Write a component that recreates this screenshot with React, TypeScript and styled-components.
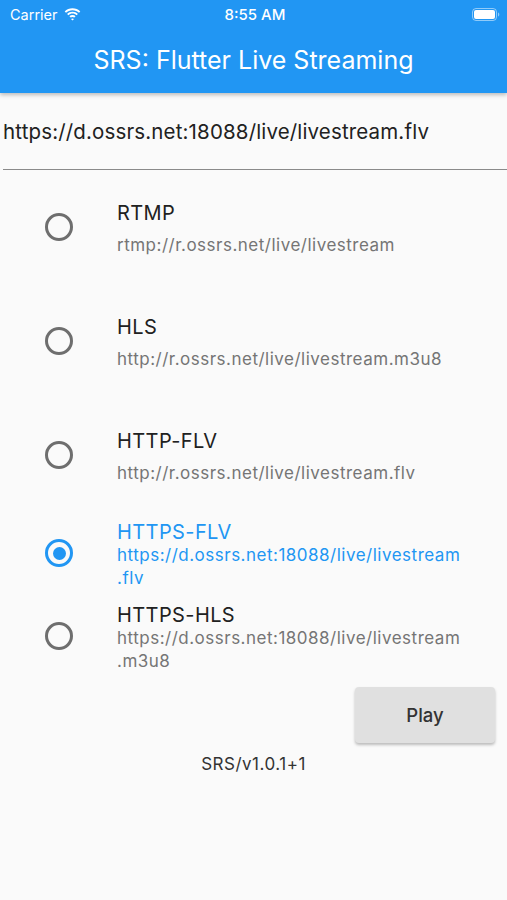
import {FunctionComponent} from "react";
import styled, {createGlobalStyle} from "styled-components";

const GlobalStyle = createGlobalStyle`
  html, body {
    margin: 0;
    padding: 0;
    background-color: #fafafa;
  }
  body {
    font-family: Inter, "Noto Sans", "Liberation Sans", sans-serif;
  }
`;

const Page = styled.div`
  width: 507px;
  height: 900px;
  background-color: #fafafa;
  display: flex;
  flex-direction: column;
  overflow: hidden;
`;

const Header = styled.header`
  background-color: #2196f3;
  box-shadow: 0 2px 4px rgba(0, 0, 0, 0.25);
  color: white;
  position: relative;
  z-index: 1;
`;

const StatusBar = styled.div`
  height: 28px;
  display: grid;
  grid-template-columns: 1fr auto 1fr;
  align-items: center;
  padding: 0 7px 0 10px;
  font-size: 15px;
`;

const Carrier = styled.div`
  display: flex;
  align-items: center;
  gap: 6px;
  font-size: 14.5px;
`;

const Time = styled.div`
  font-weight: 500;
`;

const Battery = styled.div`
  justify-self: end;
  display: flex;
  align-items: center;
`;

const Toolbar = styled.div`
  height: 65px;
  display: flex;
  align-items: center;
  justify-content: center;
  font-size: 25px;
  padding-bottom: 2px;
  box-sizing: border-box;
`;

const UrlField = styled.div`
  height: 77px;
  margin-left: 3px;
  border-bottom: 1px solid #8a8a8a;
  display: flex;
  align-items: center;
  box-sizing: border-box;
  font-size: 20.5px;
  letter-spacing: 0.15px;
  color: #212121;
`;

const List = styled.div`
  display: flex;
  flex-direction: column;
`;

const Row = styled.div<{ $height: number }>`
  height: ${p => p.$height}px;
  display: flex;
  align-items: center;
`;

const RadioSlot = styled.div`
  width: 117px;
  display: flex;
  justify-content: flex-start;
  padding-left: 45px;
  box-sizing: border-box;
`;

const RadioCircle = styled.div<{ $checked: boolean }>`
  width: 28px;
  height: 28px;
  box-sizing: border-box;
  border-radius: 50%;
  border: 3px solid ${p => (p.$checked ? "#2196f3" : "#6e6e6e")};
  display: flex;
  align-items: center;
  justify-content: center;

  &::after {
    content: "";
    display: ${p => (p.$checked ? "block" : "none")};
    width: 13px;
    height: 13px;
    border-radius: 50%;
    background-color: #2196f3;
  }
`;

const TextBlock = styled.div<{ $gap: number }>`
  display: flex;
  flex-direction: column;
  gap: ${p => p.$gap}px;
  padding-top: 4px;
`;

const Title = styled.div<{ $active: boolean }>`
  font-size: 20px;
  line-height: 23px;
  letter-spacing: 0.4px;
  color: ${p => (p.$active ? "#2196f3" : "#212121")};
`;

const Subtitle = styled.div<{ $active: boolean }>`
  font-size: 17px;
  line-height: 23px;
  letter-spacing: 0.5px;
  color: ${p => (p.$active ? "#2196f3" : "#757575")};
`;

const Actions = styled.div`
  display: flex;
  justify-content: flex-end;
  padding: 9px 12px 0 0;
`;

const PlayButton = styled.button`
  width: 140px;
  height: 56px;
  border: 0;
  border-radius: 4px;
  background-color: #e0e0e0;
  box-shadow: 0 2px 3px rgba(0, 0, 0, 0.25);
  font-family: inherit;
  font-size: 18.5px;
  font-weight: 500;
  color: #333;
`;

const Version = styled.div`
  text-align: center;
  font-size: 17px;
  letter-spacing: 0.5px;
  color: #333;
  margin-top: 11px;
`;

type Source = {
  name: string;
  lines: string[];
  height: number;
  gap: number;
};

const sources: Source[] = [
  {name: "RTMP", lines: ["rtmp://r.ossrs.net/live/livestream"], height: 114, gap: 9},
  {name: "HLS", lines: ["http://r.ossrs.net/live/livestream.m3u8"], height: 114, gap: 9},
  {name: "HTTP-FLV", lines: ["http://r.ossrs.net/live/livestream.flv"], height: 114, gap: 9},
  {name: "HTTPS-FLV", lines: ["https://d.ossrs.net:18088/live/livestream", ".flv"], height: 82, gap: 0},
  {name: "HTTPS-HLS", lines: ["https://d.ossrs.net:18088/live/livestream", ".m3u8"], height: 84, gap: 0},
];

const selected = "HTTPS-FLV";

const WifiIcon = () => (
  <svg width="17" height="13" viewBox="0 0 17 13">
    <path d="M8.5 2.2c2.5 0 4.8 1 6.5 2.6l1.3-1.3C14.3 1.5 11.5.3 8.5.3S2.7 1.5.7 3.5L2 4.8c1.7-1.6 4-2.6 6.5-2.6z" fill="white"/>
    <path d="M8.5 5.6c1.6 0 3 .6 4.1 1.6l1.3-1.3C12.5 4.6 10.6 3.8 8.5 3.800S4.5 4.6 3.1 5.9l1.3 1.3c1.1-1 2.5-1.6 4.1-1.6z" fill="white"/>
    <path d="M8.5 8.9c.7 0 1.3.3 1.8.7l1.3-1.3c-.8-.8-1.9-1.2-3.1-1.2s-2.3.4-3.1 1.2l1.3 1.3c.5-.4 1.1-.7 1.8-.7z" fill="white"/>
    <path d="M8.5 12.6l1.5-1.5c-.4-.4-.9-.6-1.5-.6s-1.1.2-1.5.6z" fill="white"/>
  </svg>
);

const BatteryIcon = () => (
  <svg width="28" height="13" viewBox="0 0 28 13">
    <rect x="0.5" y="0.5" width="24" height="12" rx="3.5" fill="none" stroke="rgba(255,255,255,0.5)"/>
    <rect x="2" y="2" width="21" height="9" rx="2" fill="white"/>
    <path d="M26 4.5v4c.8-.3 1.3-1.1 1.3-2s-.5-1.7-1.3-2z" fill="rgba(255,255,255,0.5)"/>
  </svg>
);

const App: FunctionComponent = () => {
  return (
    <Page>
      <GlobalStyle/>
      <Header>
        <StatusBar>
          <Carrier>
            Carrier
            <WifiIcon/>
          </Carrier>
          <Time>8:55 AM</Time>
          <Battery>
            <BatteryIcon/>
          </Battery>
        </StatusBar>
        <Toolbar>SRS: Flutter Live Streaming</Toolbar>
      </Header>
      <UrlField>https://d.ossrs.net:18088/live/livestream.flv</UrlField>
      <List>
        {sources.map(s => {
          const active = s.name === selected;
          return (
            <Row key={s.name} $height={s.height}>
              <RadioSlot>
                <RadioCircle $checked={active}/>
              </RadioSlot>
              <TextBlock $gap={s.gap}>
                <Title $active={active}>{s.name}</Title>
                <div>
                  {s.lines.map(line => (
                    <Subtitle key={line} $active={active}>{line}</Subtitle>
                  ))}
                </div>
              </TextBlock>
            </Row>
          );
        })}
      </List>
      <Actions>
        <PlayButton>Play</PlayButton>
      </Actions>
      <Version>SRS/v1.0.1+1</Version>
    </Page>
  );
};

export default App;
